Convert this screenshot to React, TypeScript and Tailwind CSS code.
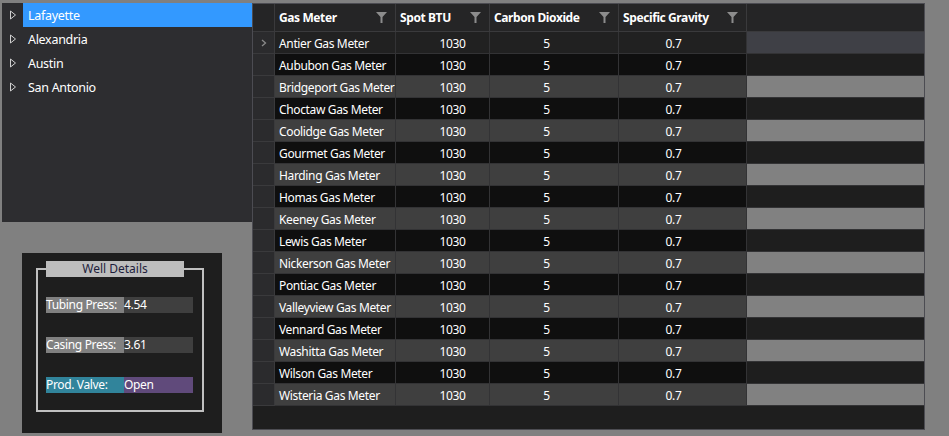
import React from "react";

const meters = [
  "Antier Gas Meter",
  "Aububon Gas Meter",
  "Bridgeport Gas Meter",
  "Choctaw Gas Meter",
  "Coolidge Gas Meter",
  "Gourmet Gas Meter",
  "Harding Gas Meter",
  "Homas Gas Meter",
  "Keeney Gas Meter",
  "Lewis Gas Meter",
  "Nickerson Gas Meter",
  "Pontiac Gas Meter",
  "Valleyview Gas Meter",
  "Vennard Gas Meter",
  "Washitta Gas Meter",
  "Wilson Gas Meter",
  "Wisteria Gas Meter",
];

const cities = ["Lafayette", "Alexandria", "Austin", "San Antonio"];

const Funnel = () => (
  <svg width="11" height="11" viewBox="0 0 11 11" className="shrink-0">
    <path d="M0 0H11L6.5 5V11H4.5V5Z" fill="#8c8c8c" />
  </svg>
);

const Expander = () => (
  <svg width="8" height="10" viewBox="0 0 8 10" className="shrink-0">
    <path d="M1.5 1L6.5 5L1.5 9Z" fill="none" stroke="#d0d0d0" strokeWidth="1" />
  </svg>
);

const HeaderCell: React.FC<{ title: string; w: string }> = ({ title, w }) => (
  <div className={`${w} h-full flex items-center justify-between pl-[4px] pr-[8px] border-r border-[#3a3a3c]`}>
    <span className="font-bold text-white tracking-[-0.4px]">{title}</span>
    <Funnel />
  </div>
);

const rowStyle = (i: number) => {
  if (i === 0) return { cell: "bg-[#212121]", fill: "bg-[#3f4046]" };
  if (i % 2 === 1) return { cell: "bg-[#0f0f0f]", fill: "bg-[#1e1e1e]" };
  return { cell: "bg-[#3f3f3f]", fill: "bg-[#818181]" };
};

const Grid = () => (
  <div className="w-[673px] h-[427px] border border-[#4c4c52] bg-[#1e1e1e] flex flex-col text-[12px] tracking-[-0.35px]">
    <div className="h-[28px] flex bg-[#252526] border-b border-[#3a3a3c] shrink-0">
      <div className="w-[22px] h-full border-r border-[#3a3a3c]" />
      <HeaderCell title="Gas Meter" w="w-[121px]" />
      <HeaderCell title="Spot BTU" w="w-[94px]" />
      <HeaderCell title="Carbon Dioxide" w="w-[129px]" />
      <HeaderCell title="Specific Gravity" w="w-[128px]" />
      <div className="flex-1 h-full" />
    </div>
    {meters.map((m, i) => {
      const s = rowStyle(i);
      return (
        <div key={m} className="h-[22px] flex shrink-0 text-white">
          <div className="w-[22px] h-full bg-[#2b2b2d] border-r border-b border-[#3a3a3c] flex items-center justify-center">
            {i === 0 && (
              <svg width="6" height="8" viewBox="0 0 6 8">
                <path d="M1 1L4.5 4L1 7" fill="none" stroke="#8a8a8a" strokeWidth="1.3" />
              </svg>
            )}
          </div>
          <div className={`w-[121px] h-full ${s.cell} border-r border-b border-[#333335] flex items-center pl-[4px] pt-[2px] whitespace-nowrap overflow-hidden`}>
            {m}
          </div>
          <div className={`w-[94px] h-full ${s.cell} border-r border-b border-[#333335] flex items-center justify-center pl-[20px] pt-[2px]`}>
            1030
          </div>
          <div className={`w-[129px] h-full ${s.cell} border-r border-b border-[#333335] flex items-center justify-center pr-[15px] pt-[2px]`}>
            5
          </div>
          <div className={`w-[128px] h-full ${s.cell} border-r border-b border-[#333335] flex items-center justify-center pr-[18px] pt-[2px]`}>
            0.7
          </div>
          <div className={`flex-1 h-full ${s.fill} border-b border-[#333335]`} />
        </div>
      );
    })}
  </div>
);

const DetailRow: React.FC<{ label: string; value: string; lc: string; vc: string }> = ({ label, value, lc, vc }) => (
  <div className="flex h-[16px] text-white text-[12px] leading-[16px] tracking-[-0.35px]">
    <div className={`w-[78px] ${lc} whitespace-nowrap`}>{label}</div>
    <div className={`w-[69px] ${vc}`}>{value}</div>
  </div>
);

export default function App() {
  return (
    <div
      className="w-[949px] h-[436px] bg-[#808080] flex pt-[3px] overflow-hidden"
      style={{ fontFamily: '"Noto Sans", "Open Sans", sans-serif' }}
    >
      <div className="w-[252px] pl-[2px] flex flex-col shrink-0">
        <div className="h-[219px] bg-[#2d2d30] flex flex-col text-[12.5px] tracking-[-0.3px] text-white">
          {cities.map((c, i) => (
            <div key={c} className="h-[24px] flex items-center">
              <div className="w-[21px] flex justify-center pl-[1px]">
                <Expander />
              </div>
              <div className={`flex-1 h-full flex items-center pl-[5px] pt-[2px] ${i === 0 ? "bg-[#3399ff]" : ""}`}>{c}</div>
            </div>
          ))}
        </div>
        <div className="mt-[31px] ml-[20px] w-[200px] h-[180px] bg-[#1e1e1e] pt-[15px] pl-[14px]">
          <div className="relative w-[168px] h-[144px] border-2 border-[#c0c0c0] pl-[8px] pt-[27px]">
            <div className="absolute left-[8px] top-[-9px] w-[138px] h-[16px] bg-[#bdbdbd] text-[#1e1e3c] text-[12px] leading-[16px] text-center">
              Well Details
            </div>
            <div className="flex flex-col gap-[24px]">
              <DetailRow label="Tubing Press:" value="4.54" lc="bg-[#808080]" vc="bg-[#3f3f3f]" />
              <DetailRow label="Casing Press:" value="3.61" lc="bg-[#808080]" vc="bg-[#3f3f3f]" />
              <DetailRow label="Prod. Valve:" value="Open" lc="bg-[#31849b]" vc="bg-[#604a7b]" />
            </div>
          </div>
        </div>
      </div>
      <Grid />
    </div>
  );
}
